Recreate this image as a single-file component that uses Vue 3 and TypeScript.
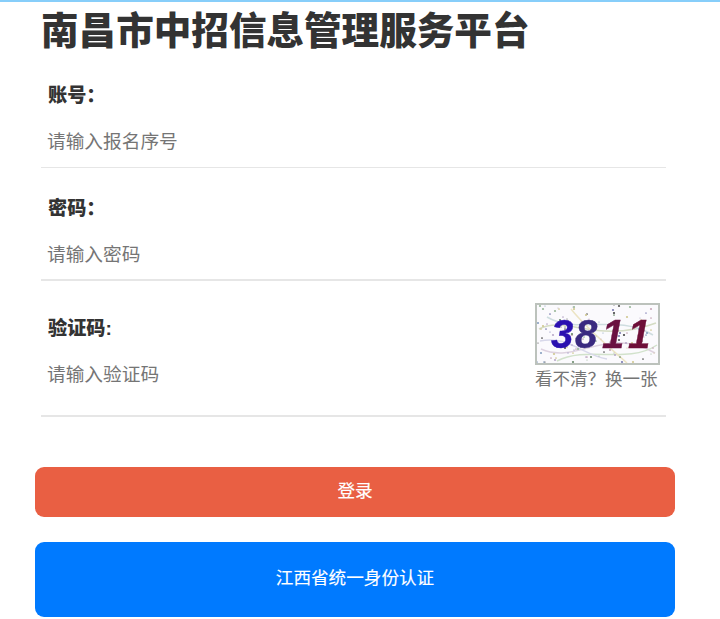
<script setup lang="ts">
// speckles and scratches behind the captcha digits, seeded so every render is the same
const palette = ['#555', '#444', '#6a8a6a', '#7a7ab0', '#b9a9c9', '#9ab89a', '#d0c890', '#88a0c0', '#c8a8b8']
let seed = 17
const next = (n: number) => {
  seed = (seed * 1103515245 + 12345) % 2147483648
  return Math.floor(seed / 65536) % n
}
const specks = Array.from({ length: 110 }, (_, i) => ({
  id: i,
  x: next(121),
  y: next(58),
  r: 0.6 + next(3) * 0.25,
  c: palette[next(palette.length)],
}))

const scratches = [
  { d: 'M2 24 C30 10 60 40 119 18', c: '#d5dcc4' },
  { d: 'M4 44 C40 60 70 20 118 48', c: '#ded2e0' },
  { d: 'M10 12 C40 30 80 8 116 30', c: '#cfdde0' },
  { d: 'M20 56 C50 40 90 60 120 40', c: '#d2e2cc' },
  { d: 'M34 4 C50 24 70 40 90 58', c: '#ece4c4' },
  { d: 'M3 36 C30 30 46 50 70 54', c: '#d8d8ea' },
]
</script>

<template>
  <div class="page">
    <h1 class="title">南昌市中招信息管理服务平台</h1>

    <div class="field first">
      <label class="label">账号：</label>
      <input class="input" type="text" placeholder="请输入报名序号" />
    </div>

    <div class="field">
      <label class="label">密码：</label>
      <input class="input" type="password" placeholder="请输入密码" />
    </div>

    <div class="field captcha-field">
      <div class="captcha-left">
        <label class="label">验证码:</label>
        <input class="input" type="text" placeholder="请输入验证码" />
      </div>
      <div class="captcha-right">
        <svg class="captcha" viewBox="0 0 121 58" width="121" height="58">
          <rect width="121" height="58" fill="#fbfafd" />
          <g class="noise">
            <path v-for="s in scratches" :key="s.d" :d="s.d" :stroke="s.c" stroke-width="1.5" fill="none" />
            <circle v-for="s in specks" :key="s.id" :cx="s.x" :cy="s.y" :r="s.r" :fill="s.c" />
          </g>
          <g class="digits">
            <text x="14" y="43" fill="#2a10b0" stroke="#2a10b0">3</text>
            <text x="38" y="43" fill="#3a2a80" stroke="#3a2a80">8</text>
            <text x="65" y="43" fill="#6a1040" stroke="#6a1040">1</text>
            <text x="91" y="43" fill="#6e0f38" stroke="#6e0f38">1</text>
          </g>
        </svg>
        <a class="refresh">看不清？换一张</a>
      </div>
    </div>

    <button class="btn btn-login">登录</button>
    <button class="btn btn-sso">江西省统一身份认证</button>
  </div>
</template>

<style scoped>
.page {
  box-sizing: border-box;
  width: 720px;
  height: 619px;
  overflow: hidden;
  border-top: 2px solid #87cefa;
  padding: 0 45px 0 35px;
  background: #fff;
  font-family: "Liberation Sans", "Noto Sans CJK SC", sans-serif;
  color: #333;
}

.title {
  margin: 7px 0 0 6px;
  font-size: 37.6px;
  line-height: 44px;
  font-weight: 900;
  color: #333;
  white-space: nowrap;
}

.field {
  box-sizing: border-box;
  height: 113px;
  margin: 0 9px 0 6px;
  padding: 28px 6px 0;
  border-bottom: 2px solid #e6e6e6;
}

.field.first {
  height: 115px;
  padding-top: 30px;
  border-bottom-width: 1px;
}

.label {
  display: block;
  padding-left: 1px;
  font-size: 19.2px;
  line-height: 26px;
  font-weight: 900;
  color: #333;
}

.input {
  display: block;
  box-sizing: border-box;
  width: 300px;
  height: 44px;
  margin-top: 11px;
  padding: 0;
  border: 0;
  outline: 0;
  background: transparent;
  font-family: inherit;
  font-size: 18.7px;
}

.input::placeholder {
  color: #757575;
  opacity: 1;
}

.captcha-field {
  display: flex;
  justify-content: space-between;
  height: 136px;
  padding: 22px 6px 0;
}

.captcha-left .label {
  margin-top: 13px;
}

.captcha-right {
  display: flex;
  flex-direction: column;
  align-items: flex-start;
}

.captcha {
  display: block;
  border: 2px solid #bcc2bc;
}

.noise {
  filter: blur(0.7px);
}

.digits {
  font-family: "Liberation Sans", sans-serif;
  font-size: 40px;
  font-weight: 700;
  font-style: italic;
  stroke-width: 0.4px;
  filter: blur(0.6px);
}

.refresh {
  margin-top: 2px;
  font-size: 17.5px;
  line-height: 24px;
  color: #757575;
  white-space: nowrap;
}

.btn {
  display: block;
  width: 640px;
  border: 0;
  border-radius: 9px;
  padding: 0 0 6px;
  color: #fff;
  font-family: inherit;
  font-size: 17.6px;
  font-weight: 400;
  -webkit-text-stroke: 0.15px #fff;
}

.btn-login {
  height: 50px;
  margin-top: 50px;
  background: #e95f43;
}

.btn-sso {
  height: 75px;
  margin-top: 25px;
  background: #007aff;
}
</style>
